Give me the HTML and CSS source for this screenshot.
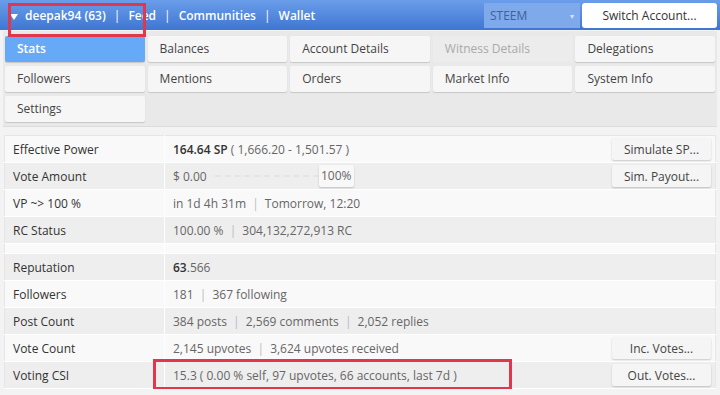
FILE: index.html
```html
<!DOCTYPE html>
<html lang="en">

<head>
    <meta charset="UTF-8">
    <title>Steem Stats</title>
    <link rel="stylesheet" href="styles.css">
</head>

<body>
    <div class="topbar">
        <div class="nav">
            <svg class="caret" width="8" height="7" viewBox="0 0 8 7"><path d="M0 1 L8 1 L4 7 Z" fill="#fff"/></svg>
            <span>deepak94 (63)</span><span class="sep">|</span><span>Feed</span><span class="sep">|</span><span>Communities</span><span class="sep">|</span><span>Wallet</span>
        </div>
        <div class="top-actions">
            <div class="select">STEEM <span class="arrow">&#9662;</span></div>
            <button class="switch" type="button">Switch Account...</button>
        </div>
    </div>

    <div class="tabs">
        <div class="tab active">Stats</div>
        <div class="tab">Balances</div>
        <div class="tab">Account Details</div>
        <div class="tab disabled">Witness Details</div>
        <div class="tab">Delegations</div>
        <div class="tab">Followers</div>
        <div class="tab">Mentions</div>
        <div class="tab">Orders</div>
        <div class="tab">Market Info</div>
        <div class="tab">System Info</div>
        <div class="tab">Settings</div>
    </div>

    <table class="stats">
        <tr>
            <td class="label">Effective Power</td>
            <td><div class="cell"><span><b>164.64 SP</b> ( 1,666.20 - 1,501.57 )</span><button class="btn" type="button">Simulate SP...</button></div></td>
        </tr>
        <tr class="alt">
            <td class="label">Vote Amount</td>
            <td><div class="cell"><span class="slider">$ 0.00<span class="track"></span><span class="knob">100%</span></span><button class="btn" type="button">Sim. Payout...</button></div></td>
        </tr>
        <tr>
            <td class="label">VP ~&gt; 100 %</td>
            <td><div class="cell"><span>in 1d 4h 31m <i>|</i> Tomorrow, 12:20</span></div></td>
        </tr>
        <tr class="alt">
            <td class="label">RC Status</td>
            <td><div class="cell"><span>100.00 % <i>|</i> 304,132,272,913 RC</span></div></td>
        </tr>
        <tr class="spacer">
            <td class="label"></td>
            <td></td>
        </tr>
        <tr class="alt">
            <td class="label">Reputation</td>
            <td><div class="cell"><span><b>63</b>.566</span></div></td>
        </tr>
        <tr>
            <td class="label">Followers</td>
            <td><div class="cell"><span>181 <i>|</i> 367 following</span></div></td>
        </tr>
        <tr class="alt">
            <td class="label">Post Count</td>
            <td><div class="cell"><span>384 posts <i>|</i> 2,569 comments <i>|</i> 2,052 replies</span></div></td>
        </tr>
        <tr>
            <td class="label">Vote Count</td>
            <td><div class="cell"><span>2,145 upvotes <i>|</i> 3,624 upvotes received</span><button class="btn" type="button">Inc. Votes...</button></div></td>
        </tr>
        <tr class="alt">
            <td class="label">Voting CSI</td>
            <td><div class="cell"><span>15.3 ( 0.00 % self, 97 upvotes, 66 accounts, last 7d )</span><button class="btn" type="button">Out. Votes...</button></div></td>
        </tr>
    </table>

    <!-- annotation boxes drawn over the screenshot -->
    <div class="mark mark-user"></div>
    <div class="mark mark-csi"></div>
</body>

</html>
```

FILE: styles.css
```css
body {
    margin: 0;
    font-family: "Open Sans", sans-serif;
    font-size: 12px;
    background: #f3f3f3;
    color: #333;
    position: relative;
    overflow: hidden;
}

.topbar {
    height: 30px;
    background: linear-gradient(#6a9de9, #3f76d2);
    display: flex;
    align-items: center;
    justify-content: space-between;
    padding: 0 3px 0 10px;
}

.nav {
    display: flex;
    align-items: center;
    color: #fff;
    font-weight: 600;
}

.caret {
    margin-right: 7px;
    margin-top: 2px;
}

.nav .sep {
    font-weight: normal;
    margin: 0 8px;
}

.top-actions {
    display: flex;
    align-items: center;
}

.select {
    width: 90px;
    height: 25px;
    line-height: 25px;
    padding-left: 6px;
    background: #7ea9ea;
    color: #42609a;
    position: relative;
}

.select .arrow {
    position: absolute;
    right: 6px;
    top: 0;
    font-size: 8px;
    color: #d7e4f8;
}

.switch {
    width: 135px;
    height: 25px;
    margin-left: 2px;
    background: #fff;
    border: none;
    border-radius: 3px;
    font-family: "Open Sans", sans-serif;
    font-size: 12px;
    color: #333;
}

.tabs {
    margin: 1px 3px 0;
    background: #e9e9e9;
    padding: 5px 2px 4px;
    display: grid;
    grid-template-columns: repeat(5, 1fr);
    gap: 4px 3px;
    border-bottom: 1px solid #dcdcdc;
}

.tab {
    height: 26px;
    line-height: 26px;
    padding-left: 12px;
    background: #f6f6f6;
    border-radius: 2px;
    box-shadow: 0 1px 1px rgba(0, 0, 0, 0.15);
    color: #444;
}

.tab.active {
    background: #66aaf7;
    color: #fff;
    font-weight: 600;
}

.tab.disabled {
    background: #ececec;
    color: #aaa;
    box-shadow: none;
}

.stats {
    margin: 8px 4px 0;
    width: 712px;
    border-collapse: collapse;
    border: 1px solid #e6e6e6;
}

.stats td {
    height: 26px;
    padding: 0;
    border-bottom: 1px solid #fff;
    background: #f9f9f9;
    color: #666;
}

.stats .alt td {
    background: #eeeeee;
}

.stats .label {
    width: 151px;
    padding-left: 8px;
    border-right: 1px solid #fff;
    color: #333;
}

.stats .spacer td {
    height: 9px;
    background: #fafafa;
}

.stats b {
    color: #333;
    font-weight: 600;
}

.stats i {
    font-style: normal;
    color: #bbb;
    margin: 0 3px;
}

.cell {
    display: flex;
    align-items: center;
    justify-content: space-between;
    padding-left: 8px;
}

.btn {
    width: 99px;
    height: 22px;
    margin-right: 4px;
    background: #f5f5f5;
    border: none;
    border-radius: 2px;
    box-shadow: 0 1px 2px rgba(0, 0, 0, 0.2);
    font-family: "Open Sans", sans-serif;
    font-size: 12px;
    color: #444;
}

.slider {
    display: flex;
    align-items: center;
}

.track {
    width: 104px;
    margin-left: 8px;
    border-top: 2px dashed #e4e4e4;
}

.knob {
    width: 35px;
    height: 22px;
    line-height: 22px;
    text-align: center;
    background: #f8f8f8;
    border-radius: 2px;
    box-shadow: 0 1px 2px rgba(0, 0, 0, 0.2);
    color: #666;
}

.mark {
    position: absolute;
    border: 3px solid #e1364b;
}

.mark-user {
    left: 8px;
    top: 3px;
    width: 132px;
    height: 28px;
}

.mark-csi {
    left: 153px;
    top: 359px;
    width: 353px;
    height: 25px;
}
```
